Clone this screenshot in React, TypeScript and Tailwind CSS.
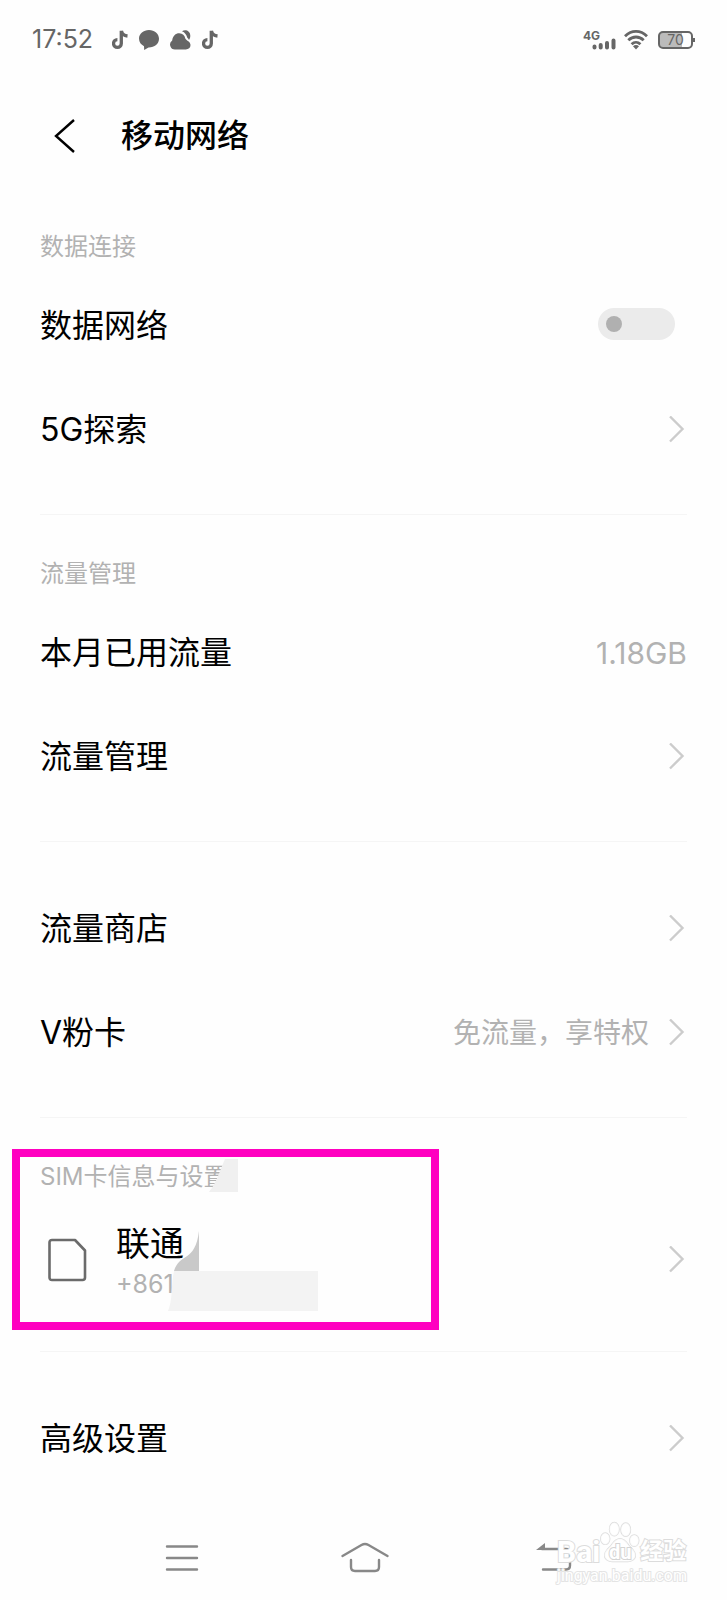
import { useState } from 'react';
import type { ReactNode } from 'react';

interface SettingRowProps {
  label: string;
  value?: string;
  arrow?: boolean;
}

interface SectionProps {
  title?: string;
  last?: boolean;
  children: ReactNode;
}

function TikTokIcon() {
  return (
    <svg width="16" height="20" viewBox="0 0 16 20" fill="none" stroke="#666" strokeWidth="3.300">
      <path d="M9.300 0.800V13.500A3.900 3.900 0 1 1 5.400 9.600" />
      <path d="M9.500 1C10 4 12 5.600 15.500 6" />
    </svg>
  );
}

function ChatIcon() {
  return (
    <svg width="20" height="20" viewBox="0 0 20 20" fill="#666">
      <path d="M10 0C4.500 0 0 3.700 0 8.600c0 3.700 2 6.200 5 7.600L5.200 20l4.300-2.600C15.500 17.500 20 13.900 20 8.700 20 3.700 15.500 0 10 0z" />
    </svg>
  );
}

function CloudIcon() {
  return (
    <svg width="21" height="20" viewBox="0 0 21 20" fill="#666">
      <path d="M5 19.500a5 5 0 0 1-2.800-9.100C2.800 6 5.500 3.300 9.300 3.300c3.400 0 5.300 2.200 6 5.200 1.200 2.300 5.200 3 5.200 6.600 0 2.900-2 4.400-4.700 4.400z" />
      <path d="M12 1.200C15.500-1 20.500 1 20.300 6c-.1 1.800-.5 2.800-1.300 4-.3-1-1-1.600-1.700-2.200C16.700 5 14.800 2.300 12 1.200z" />
    </svg>
  );
}

function SignalIcon() {
  return (
    <svg width="24" height="12" viewBox="0 0 24 12" stroke="#666" strokeWidth="4" strokeLinecap="round">
      <path d="M2.500 8.500v1M8.700 7v2.500M15 5v4.500M21.500 2.500v7" />
    </svg>
  );
}

function WifiIcon() {
  return (
    <svg width="24" height="20" viewBox="0 0 24 20" fill="none" stroke="#666" strokeWidth="2.800">
      <path d="M1 6.300C7.500-.2 16.500-.2 23 6.300" />
      <path d="M4.300 10.300c4.500-4.400 10.900-4.400 15.400 0" />
      <path d="M7.600 14.300c2.600-2.600 6.200-2.600 8.800 0" />
      <path d="M12 19.500l-3-3.200c1.800-1.600 4.200-1.600 6 0z" fill="#666" stroke="none" />
    </svg>
  );
}

function Chevron() {
  return (
    <svg className="shrink-0" width="18" height="28" viewBox="0 0 18 28" fill="none" stroke="#ccc" strokeWidth="2.400">
      <path d="M1 0.500L13.500 13L1 25.500" />
    </svg>
  );
}

function SimIcon() {
  return (
    <svg width="40" height="44" viewBox="0 0 40 44" fill="none" stroke="#6b6b6b" strokeWidth="2.600" strokeLinejoin="round">
      <path d="M4 2H27L37 12.500V39.500Q37 42 34.500 42H4Q1.500 42 1.500 39.500V4.500Q1.500 2 4 2Z" />
    </svg>
  );
}

function StatusBar() {
  return (
    <div className="flex h-20 items-center justify-between px-8 text-[#666]">
      <div className="flex items-center gap-[11px]">
        <span className="mr-2 text-[25px]">17:52</span>
        <TikTokIcon />
        <ChatIcon />
        <CloudIcon />
        <TikTokIcon />
      </div>
      <div className="flex items-center">
        <div className="mr-2 flex h-5 items-end">
          <span className="-mr-2 self-start text-xs leading-3 font-bold">4G</span>
          <SignalIcon />
        </div>
        <WifiIcon />
        <div className="ml-2.5 flex h-[18px] w-[35px] items-center justify-center rounded-[5px] border-2 border-[#666] bg-linear-to-r from-[#bbb] from-70% to-transparent to-70% text-sm">
          70
        </div>
        <div className="h-1 w-0.5 bg-[#666]" />
      </div>
    </div>
  );
}

function Section({ title, last, children }: SectionProps) {
  return (
    <section className={last ? 'mx-10' : 'mx-10 border-b border-[#f5f5f5] pb-8'}>
      {title ? (
        <h2 className="flex h-[86px] items-center pt-8 text-2xl text-[#b2b2b2]">{title}</h2>
      ) : (
        <div className="h-[35px]" />
      )}
      {children}
    </section>
  );
}

function SettingRow({ label, value, arrow = true }: SettingRowProps) {
  return (
    <a href="#" className="flex h-26 items-center justify-between">
      <span className="text-[32px]">{label}</span>
      <span className={`flex items-center gap-5 text-[#b2b2b2] ${arrow ? 'text-[28px]' : 'text-3xl'}`}>
        {value}
        {arrow && <Chevron />}
      </span>
    </a>
  );
}

function Watermark() {
  return (
    <div className="pointer-events-none absolute right-10 bottom-3 font-[Roboto,'Noto_Sans_CJK_SC',sans-serif] font-bold text-white [paint-order:stroke_fill]">
      <div className="flex items-end leading-6">
        <span className="text-3xl leading-6 [-webkit-text-stroke:2px_#dcdcdc]">Bai</span>
        <span className="relative">
          <svg width="40" height="43" viewBox="0 0 42 44" fill="#fff" fillOpacity="0.8" stroke="#dcdcdc" strokeWidth="1.500">
            <ellipse cx="5.500" cy="18" rx="4.700" ry="6" />
            <ellipse cx="15" cy="8" rx="5" ry="7" />
            <ellipse cx="27" cy="8.500" rx="5" ry="7" />
            <ellipse cx="36" cy="20" rx="4.700" ry="6" />
            <path d="M21 18c5 0 7 4 10 8 3 3 7 6 6 11-2 6-9 5-16 5s-14 1-16-5c-1-5 3-8 6-11 3-4 5-8 10-8z" />
          </svg>
          <span className="absolute inset-x-0 bottom-0 text-center text-xl leading-6 [-webkit-text-stroke:2px_#d4d4d4]">du</span>
        </span>
        <span className="text-[23px] leading-6 [-webkit-text-stroke:2px_#dcdcdc]">经验</span>
      </div>
      <div className="text-base leading-6 font-normal [-webkit-text-stroke:2px_#e4e4e4]">jingyan.baidu.com</div>
    </div>
  );
}

export default function App() {
  const [dataOn, setDataOn] = useState(false);

  return (
    <div className="relative flex min-h-screen flex-col bg-[#fefefe] font-[Inter,'Noto_Sans_CJK_SC',sans-serif] text-black">
      <StatusBar />
      <header className="flex h-27 items-center pt-1 pl-13">
        <button type="button" aria-label="返回">
          <svg width="24" height="36" viewBox="0 0 24 36" fill="none" stroke="#000" strokeWidth="2.400">
            <path d="M22 2L4 18L22 34" />
          </svg>
        </button>
        <h1 className="ml-[45px] text-[32px] font-medium">移动网络</h1>
      </header>

      <Section title="数据连接">
        <div className="flex h-26 items-center justify-between">
          <label htmlFor="mobile-data" className="text-[32px]">数据网络</label>
          <input
            id="mobile-data"
            type="checkbox"
            role="switch"
            checked={dataOn}
            onChange={(e) => setDataOn(e.target.checked)}
            className="mr-3 mb-1 flex h-8 w-[77px] appearance-none items-center rounded-full bg-[#ebebeb] px-2 before:size-4 before:rounded-full before:bg-[#b0b0b0] checked:justify-end checked:bg-blue-500 checked:before:bg-white"
          />
        </div>
        <SettingRow label="5G探索" />
      </Section>

      <Section title="流量管理">
        <SettingRow label="本月已用流量" value="1.18GB" arrow={false} />
        <SettingRow label="流量管理" />
      </Section>

      <Section>
        <SettingRow label="流量商店" />
        <SettingRow label="V粉卡" value="免流量，享特权" />
      </Section>

      <div className="relative">
        <Section title="SIM卡信息与设置">
          <a href="#" className="mb-[3px] flex h-28 items-center justify-between">
            <span className="flex items-center gap-7 pl-2">
              <SimIcon />
              <span className="flex flex-col pt-2">
                <span className="text-[34px] leading-10">联通</span>
                <span className="text-[25px] leading-10 text-[#b2b2b2]">+861</span>
              </span>
            </span>
            <Chevron />
          </a>
        </Section>
        {/* erased digits and the highlight frame lie over the section */}
        <svg className="pointer-events-none absolute top-0 left-0" width="440" height="220" viewBox="0 0 440 220">
          <path d="M225 41H238V74H209C216 66 220 52 225 41Z" fill="#f0f0f0" />
          <path d="M199 113V153H174C180 134 195 145 199 113Z" fill="#c9c9c9" />
          <path d="M174 153H318V193H168C173 182 171 165 174 153Z" fill="#f3f3f3" />
          <rect x="16" y="35" width="419" height="173" fill="none" stroke="#ff00c0" strokeWidth="8" />
        </svg>
      </div>

      <Section last>
        <SettingRow label="高级设置" />
      </Section>

      <nav className="mt-auto flex h-21 items-center justify-between pr-[155px] pl-[165px]">
        <button type="button" aria-label="最近任务">
          <svg width="34" height="28" viewBox="0 0 34 28" stroke="#888" strokeWidth="2.400" strokeLinecap="round">
            <path d="M2 2.500H32M2 14H32M2 25.500H32" />
          </svg>
        </button>
        <button type="button" aria-label="主屏幕">
          <svg width="48" height="32" viewBox="0 0 48 32" fill="none" stroke="#888" strokeWidth="2.400" strokeLinecap="round">
            <path d="M1.500 14L20.500 3Q24 1 27.500 3L46.500 14" />
            <path d="M10 18V25Q10 29 14 29H34Q38 29 38 25V18" />
          </svg>
        </button>
        <button type="button" aria-label="返回上一级">
          <svg width="42" height="30" viewBox="-6 0 42 30" fill="none" stroke="#888" strokeWidth="2.400" strokeLinecap="round">
            <path d="M6 6H30Q34 6 34 10V22.500Q34 26.500 30 26.500H7" />
            <path d="M0 7L9 0V7Z" fill="#888" stroke="none" />
          </svg>
        </button>
      </nav>
      <Watermark />
    </div>
  );
}
